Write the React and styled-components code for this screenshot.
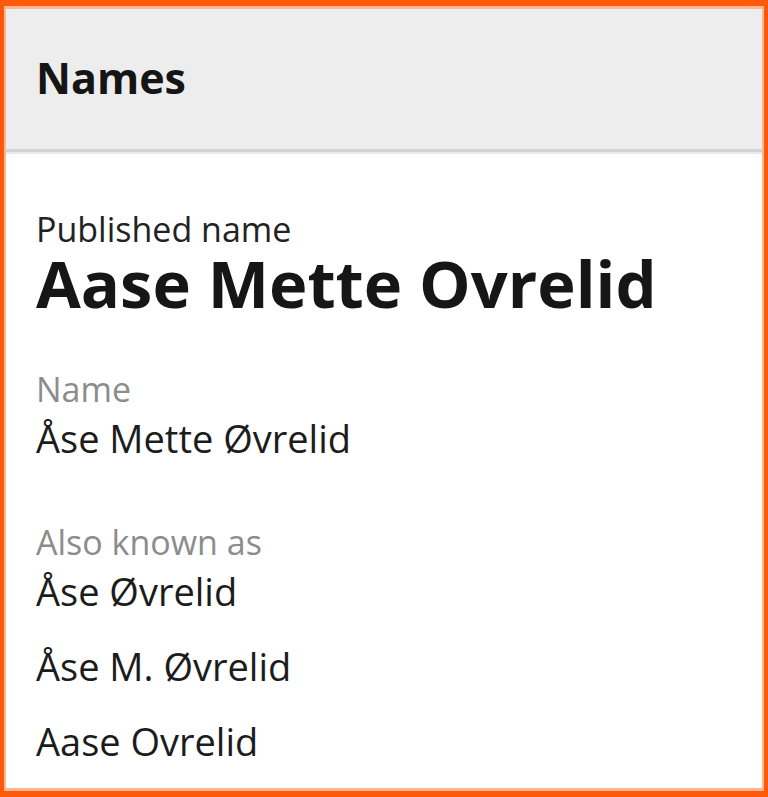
import React from 'react';
import styled, { createGlobalStyle } from 'styled-components';

const GlobalStyle = createGlobalStyle`
    html, body {
        margin: 0;
        padding: 0;
        background: #ffffff;
    }
    body {
        font-family: "Open Sans", "Noto Sans", sans-serif;
        color: #1c1c1c;
    }
`;

// outer orange frame, with a softer inner edge
const Frame = styled.div`
    box-sizing: border-box;
    width: 768px;
    height: 797px;
    border-style: solid;
    border-color: #ff5a0a;
    border-width: 6px 4px;
`;

const Panel = styled.section`
    box-sizing: border-box;
    height: 100%;
    border-style: solid;
    border-color: rgba(255, 90, 10, 0.45);
    border-width: 3px 2px;
    display: flex;
    flex-direction: column;
    background: #ffffff;
`;

const Header = styled.header`
    background: #ededed;
    padding: 43px 30px 45px;
    border-bottom: 3px solid #d2d2d2;
    box-shadow: 0 2px 0 #e9e9e9;
`;

const Title = styled.h2`
    margin: 0;
    font-size: 43px;
    line-height: 52px;
    font-weight: 700;
    color: #151515;
`;

const Body = styled.div`
    padding: 59px 30px 0;
    display: flex;
    flex-direction: column;
`;

const Field = styled.div`
    display: flex;
    flex-direction: column;
    margin-top: ${(props) => props.gap || 0}px;
`;

const Label = styled.div`
    font-size: 34px;
    line-height: ${(props) => (props.strong ? 37 : 38)}px;
    color: ${(props) => (props.strong ? '#222222' : '#8c8c8c')};
    margin-bottom: ${(props) => (props.strong ? 0 : 9)}px;
`;

const BigName = styled.div`
    font-size: 65px;
    line-height: 70px;
    font-weight: 700;
    color: #161616;
`;

const Value = styled.div`
    font-size: 38px;
    line-height: 42px;
    color: #1c1c1c;
`;

const ValueList = styled.div`
    display: flex;
    flex-direction: column;
    gap: 33px;
`;

const aliases = ['Åse Øvrelid', 'Åse M. Øvrelid', 'Aase Ovrelid'];

export default function App() {
    return (
        <>
            <GlobalStyle />
            <Frame>
                <Panel>
                    <Header>
                        <Title>Names</Title>
                    </Header>
                    <Body>
                        <Field>
                            <Label strong>Published name</Label>
                            <BigName>Aase Mette Ovrelid</BigName>
                        </Field>
                        <Field gap={52}>
                            <Label>Name</Label>
                            <Value>Åse Mette Øvrelid</Value>
                        </Field>
                        <Field gap={64}>
                            <Label>Also known as</Label>
                            <ValueList>
                                {aliases.map((name) => (
                                    <Value key={name}>{name}</Value>
                                ))}
                            </ValueList>
                        </Field>
                    </Body>
                </Panel>
            </Frame>
        </>
    );
}
